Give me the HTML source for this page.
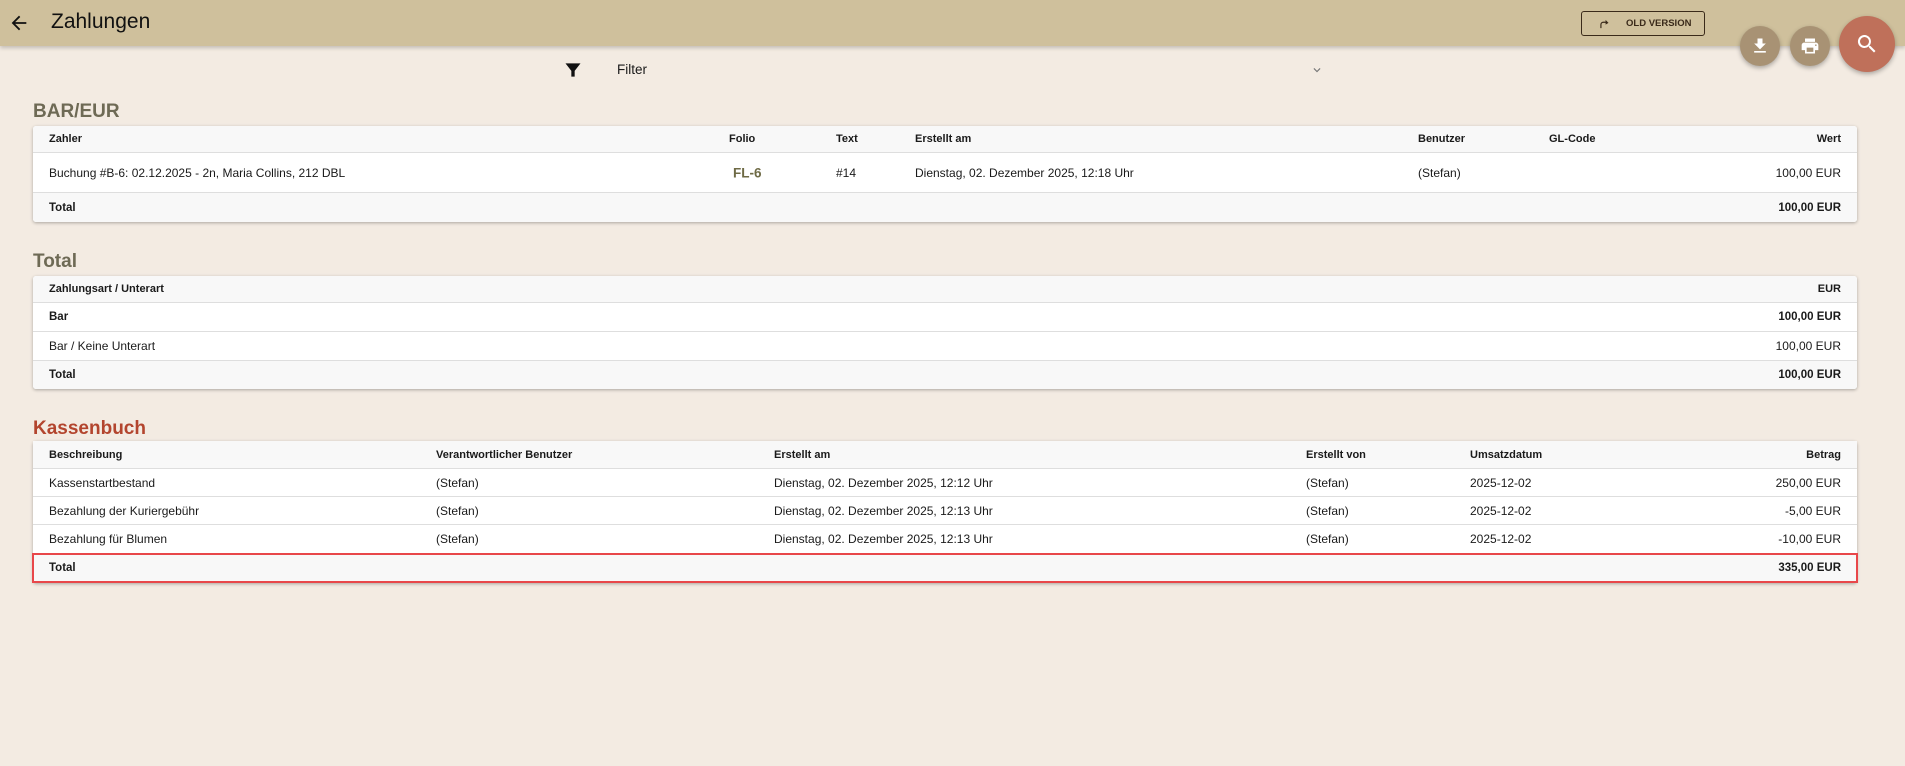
<!DOCTYPE html>
<html><head><meta charset="utf-8"><style>
*{box-sizing:border-box;margin:0;padding:0}
body{width:1905px;height:766px;background:#f3ebe2;font-family:"Liberation Sans",sans-serif;color:#1a1a1a;position:relative;overflow:hidden}
.hdr{position:absolute;left:0;top:0;width:1905px;height:46px;background:#cfc09c;box-shadow:0 2px 4px rgba(0,0,0,.2)}
.abs{position:absolute;white-space:nowrap}
.card{position:absolute;left:33px;width:1824px;background:#fff;border-radius:3px;box-shadow:0 1px 3px rgba(0,0,0,.3);overflow:hidden}
.row{position:relative;border-bottom:1px solid #dedede;font-size:12px}
.row:last-child{border-bottom:none}
.row.h,.row.t{background:#f8f8f8;font-weight:bold;font-size:11px}
.row.t{font-size:11.5px}
.row span{position:absolute;top:50%;transform:translateY(-50%);white-space:nowrap}
.row .r{right:16px}
h2{position:absolute;left:33px;font-size:19px;font-weight:bold;color:#6e6a55}
.fab{position:absolute;border-radius:50%;box-shadow:0 2px 5px rgba(0,0,0,.3);display:flex;align-items:center;justify-content:center}
</style></head><body>
<div class="hdr"></div>
<svg class="abs" style="left:8px;top:12px" width="22" height="22" viewBox="0 0 24 24"><path d="M20 11H7.8l5.6-5.6L12 4l-8 8 8 8 1.4-1.4L7.8 13H20z" fill="#111"/></svg>
<div class="abs" style="left:51px;top:10px;font-size:21px;color:#111">Zahlungen</div>
<div class="abs" style="left:1581px;top:11px;width:124px;height:25px;border:1px solid #3a2a1a;border-radius:3px;font-size:9.5px;font-weight:bold;color:#3a2a1a">
<svg style="position:absolute;left:16px;top:5px" width="14" height="14" viewBox="0 0 24 24"><path d="M18 10l-5-5v3H9a5 5 0 0 0-5 5v6h2v-6a3 3 0 0 1 3-3h4v3z" fill="#3a2a1a"/></svg>
<span style="position:absolute;left:44px;top:6px">OLD VERSION</span></div>
<div class="fab" style="left:1740px;top:26px;width:40px;height:40px;background:#a89274"><svg width="20" height="20" viewBox="0 0 24 24"><path d="M19 9h-4V3H9v6H5l7 7zM5 18v2h14v-2z" fill="#fff"/></svg></div>
<div class="fab" style="left:1790px;top:26px;width:40px;height:40px;background:#a89274"><svg width="20" height="20" viewBox="0 0 24 24"><path d="M19 8H5a3 3 0 0 0-3 3v6h4v4h12v-4h4v-6a3 3 0 0 0-3-3zm-3 11H8v-5h8zm3-7a1 1 0 1 1 0-2 1 1 0 0 1 0 2zM18 3H6v4h12z" fill="#fff"/></svg></div>
<div class="fab" style="left:1839px;top:16px;width:56px;height:56px;background:#bf705a"><svg width="24" height="24" viewBox="0 0 24 24"><path d="M15.5 14h-.8l-.3-.3A6.5 6.5 0 1 0 9.5 16a6.5 6.5 0 0 0 4.2-1.6l.3.3v.8l5 5 1.5-1.5zm-6 0a4.5 4.5 0 1 1 0-9 4.5 4.5 0 0 1 0 9z" fill="#fff"/></svg></div>
<svg class="abs" style="left:563px;top:60px" width="20" height="20" viewBox="0 0 24 24"><path d="M3 4h18l-7 9v7h-4v-7z" fill="#111"/></svg>
<div class="abs" style="left:617px;top:62px;font-size:13.5px">Filter</div>
<svg class="abs" style="left:1310px;top:63px" width="14" height="14" viewBox="0 0 24 24"><path d="M7.4 8.6L12 13.2l4.6-4.6L18 10l-6 6-6-6z" fill="#777"/></svg>

<h2 style="top:101px">BAR/EUR</h2>
<div class="card" style="top:126px">
<div class="row h" style="height:27px"><span style="left:16px">Zahler</span><span style="left:696px">Folio</span><span style="left:803px">Text</span><span style="left:882px">Erstellt am</span><span style="left:1385px">Benutzer</span><span style="left:1516px">GL-Code</span><span class="r">Wert</span></div>
<div class="row" style="height:40px"><span style="left:16px">Buchung #B-6: 02.12.2025 - 2n, Maria Collins, 212 DBL</span><span style="left:700px;color:#6e6a45;font-weight:bold;font-size:13.5px">FL-6</span><span style="left:803px">#14</span><span style="left:882px">Dienstag, 02. Dezember 2025, 12:18 Uhr</span><span style="left:1385px">(Stefan)</span><span class="r">100,00 EUR</span></div>
<div class="row t" style="height:29px"><span style="left:16px">Total</span><span class="r">100,00 EUR</span></div>
</div>

<h2 style="top:251px">Total</h2>
<div class="card" style="top:276px">
<div class="row h" style="height:27px"><span style="left:16px">Zahlungsart / Unterart</span><span class="r">EUR</span></div>
<div class="row t" style="height:29px;background:#fff"><span style="left:16px">Bar</span><span class="r">100,00 EUR</span></div>
<div class="row" style="height:29px"><span style="left:16px">Bar / Keine Unterart</span><span class="r">100,00 EUR</span></div>
<div class="row t" style="height:28px"><span style="left:16px">Total</span><span class="r">100,00 EUR</span></div>
</div>

<h2 style="top:418px;color:#b3452e">Kassenbuch</h2>
<div class="card" style="top:441px;overflow:visible">
<div class="row h" style="height:28px"><span style="left:16px">Beschreibung</span><span style="left:403px">Verantwortlicher Benutzer</span><span style="left:741px">Erstellt am</span><span style="left:1273px">Erstellt von</span><span style="left:1437px">Umsatzdatum</span><span class="r">Betrag</span></div>
<div class="row" style="height:28px"><span style="left:16px">Kassenstartbestand</span><span style="left:403px">(Stefan)</span><span style="left:741px">Dienstag, 02. Dezember 2025, 12:12 Uhr</span><span style="left:1273px">(Stefan)</span><span style="left:1437px">2025-12-02</span><span class="r">250,00 EUR</span></div>
<div class="row" style="height:28px"><span style="left:16px">Bezahlung der Kuriergebühr</span><span style="left:403px">(Stefan)</span><span style="left:741px">Dienstag, 02. Dezember 2025, 12:13 Uhr</span><span style="left:1273px">(Stefan)</span><span style="left:1437px">2025-12-02</span><span class="r">-5,00 EUR</span></div>
<div class="row" style="height:28px;border-bottom:none"><span style="left:16px">Bezahlung für Blumen</span><span style="left:403px">(Stefan)</span><span style="left:741px">Dienstag, 02. Dezember 2025, 12:13 Uhr</span><span style="left:1273px">(Stefan)</span><span style="left:1437px">2025-12-02</span><span class="r">-10,00 EUR</span></div>
<div class="row t" style="height:30px;border:2px solid #e8474a;margin:0 -1px"><span style="left:15px">Total</span><span class="r" style="right:15px">335,00 EUR</span></div>
</div>
</body></html>
